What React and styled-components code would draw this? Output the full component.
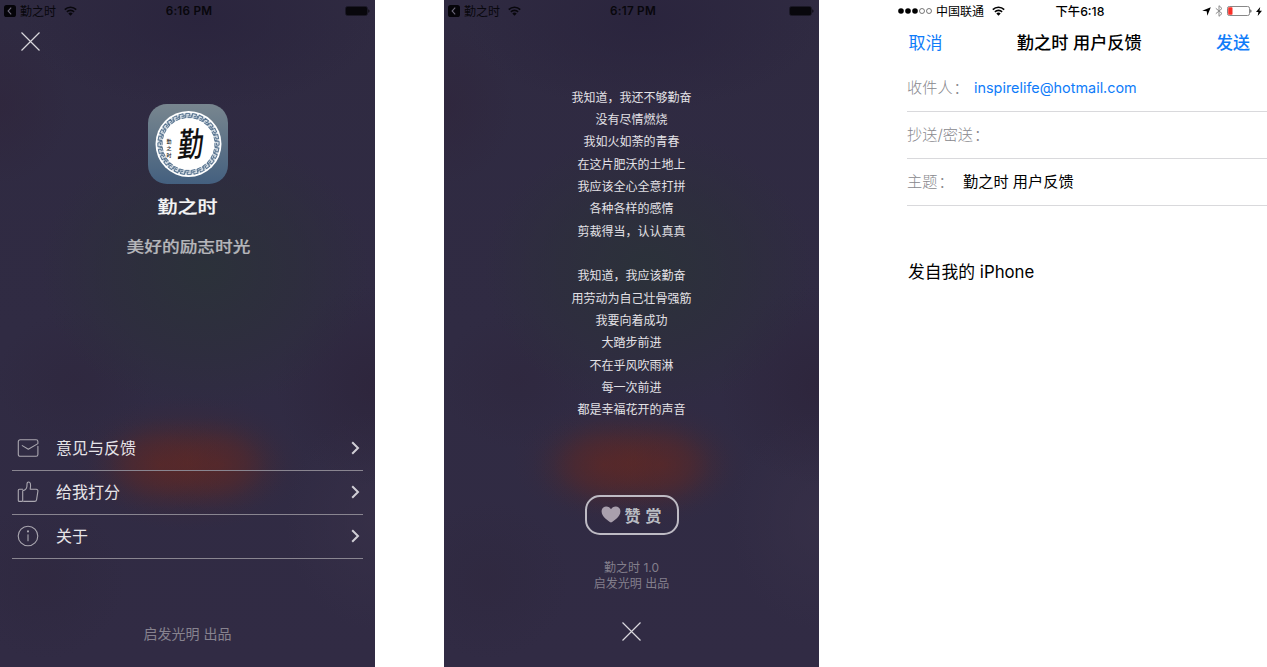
import React from 'react';
import styled, { createGlobalStyle } from 'styled-components';

const GlobalStyle = createGlobalStyle`
  * { box-sizing: border-box; }
  body { margin: 0; background: #fff; }
`;

const Board = styled.main`
  display: flex;
  width: 1267px;
  height: 667px;
  overflow: hidden;
  font-family: Inter, "Noto Sans CJK SC", sans-serif;
  white-space: nowrap;
`;

const Phone = styled.section`
  display: flex;
  flex-direction: column;
  flex: none;
  width: 375px;
  height: 667px;
  margin-left: ${(p) => p.$gap || 0}px;
`;

const DarkPhone = styled(Phone)`
  background:
    radial-gradient(ellipse 72px 50px at 160px 465px, rgba(96, 40, 36, 0.6) 0%, rgba(92, 40, 38, 0.42) 40%, rgba(84, 40, 42, 0.16) 70%, rgba(78, 40, 46, 0.04) 90%, transparent 100%),
    radial-gradient(ellipse 72px 50px at 216px 465px, rgba(96, 40, 36, 0.6) 0%, rgba(92, 40, 38, 0.42) 40%, rgba(84, 40, 42, 0.16) 70%, rgba(78, 40, 46, 0.04) 90%, transparent 100%),
    radial-gradient(ellipse 120px 68px at 188px 463px, rgba(92, 40, 38, 0.6) 0%, rgba(84, 40, 42, 0.38) 40%, rgba(74, 40, 48, 0.15) 70%, rgba(70, 40, 52, 0.04) 90%, transparent 100%),
    radial-gradient(ellipse 165px 140px at 205px 270px, rgba(43, 50, 57, 0.9) 0%, rgba(44, 48, 58, 0.55) 55%, transparent 100%),
    radial-gradient(ellipse 100px 100px at 375px 385px, rgba(44, 34, 56, 0.6), transparent 100%),
    radial-gradient(ellipse 80px 70px at 75px 380px, rgba(46, 38, 60, 0.5), transparent 100%),
    radial-gradient(ellipse 70px 80px at 0px 105px, rgba(47, 37, 59, 0.6), transparent 100%),
    radial-gradient(ellipse 180px 90px at 200px 20px, rgba(42, 36, 61, 0.9), transparent 100%),
    radial-gradient(ellipse 90px 110px at 375px 520px, rgba(55, 48, 72, 0.8), transparent 100%),
    radial-gradient(ellipse 80px 80px at 45px 580px, rgba(46, 39, 61, 0.5), transparent 100%),
    linear-gradient(#2f2a41, #302b43 50%, #312b44);
`;

const StatusBar = styled.header`
  display: grid;
  grid-template-columns: 1fr auto 1fr;
  align-items: center;
  height: 20px;
  padding: 1px ${(p) => p.$right ?? 5}px 0 ${(p) => p.$left ?? 4}px;
  font-size: 12px;
  line-height: 19px;
  color: ${(p) => p.$color || '#08070c'};
`;

const StatusSide = styled.div`
  display: flex;
  align-items: center;
  gap: ${(p) => p.$gap || 4}px;
  justify-content: ${(p) => (p.$end ? 'flex-end' : 'flex-start')};
  svg { flex: none; display: block; }
`;

const Clock = styled.time`
  font-weight: ${(p) => p.$weight || 600};
  font-size: ${(p) => p.$size || 11.7}px;
  letter-spacing: ${(p) => p.$track || 0}px;
  padding-top: 1px;
  padding-left: ${(p) => p.$shift || 0}px;
`;

const CloseBar = styled.div`
  display: flex;
  justify-content: ${(p) => (p.$center ? 'center' : 'flex-start')};
  padding: ${(p) => p.$pad};
  svg { display: block; }
`;

const AppIcon = styled.div`
  width: 80px;
  height: 80px;
  margin: 53px auto 0;
  svg { display: block; }
`;

const Brush = styled.div`
  font-family: "Noto Sans CJK SC", sans-serif;
  font-weight: 500;
  -webkit-text-stroke: 0.25px currentColor;
  text-align: center;
  font-size: ${(p) => p.$size}px;
  line-height: 24px;
  margin-top: ${(p) => p.$top || 0}px;
  padding-left: ${(p) => p.$shift || 0}px;
  color: ${(p) => p.$color};
  transform: scaleY(0.86);
`;

const Menu = styled.ul`
  list-style: none;
  margin: 170px 12px 0;
  padding: 0;
`;

const MenuItem = styled.li`
  display: flex;
  align-items: center;
  height: 44px;
  padding: 0 3px 1px 5px;
  border-bottom: 1px solid #898590;
  color: #e6e4e8;
  font-size: 16px;
  line-height: 24px;
  svg { display: block; flex: none; }
`;

const MenuLabel = styled.span`
  flex: 1;
  padding-left: 17px;
`;

const Maker = styled.footer`
  margin-top: 64px;
  text-align: center;
  font-size: 14px;
  line-height: 22px;
  color: #87838f;
`;

const Poem = styled.div`
  margin-top: 66.6px;
  text-align: center;
  font-size: 12px;
  line-height: 22.35px;
  color: #e3e1e6;
`;

const PoemLine = styled.div`
  height: 22.35px;
`;

const Praise = styled.button`
  display: flex;
  align-items: center;
  justify-content: center;
  gap: 3px;
  width: 94px;
  height: 40px;
  margin: 73px auto 0;
  padding: 0 0 0 5px;
  border: 2px solid #bebbc4;
  border-radius: 15px;
  background: transparent;
  font-family: "Noto Sans CJK SC", sans-serif;
  font-weight: 700;
  font-size: 16px;
  line-height: 20px;
  letter-spacing: 5px;
  color: #b9bcc2;
`;

const Version = styled.div`
  margin-top: 25px;
  text-align: center;
  font-size: 12px;
  line-height: 16px;
  color: #837f8c;
`;

const NavBar = styled.nav`
  display: grid;
  grid-template-columns: 1fr auto 1fr;
  align-items: center;
  height: 45px;
  padding: 0 17px 0 16.5px;
  font-size: 17px;
  line-height: 24px;
`;

const NavAction = styled.a`
  color: #0f7cf9;
  font-weight: ${(p) => (p.$strong ? 500 : 400)};
  text-align: ${(p) => (p.$strong ? 'right' : 'left')};
`;

const NavTitle = styled.h1`
  margin: 0;
  font-size: 17.2px;
  font-weight: 500;
`;

const Field = styled.div`
  display: flex;
  align-items: center;
  height: 47px;
  margin-left: 15px;
  border-bottom: 1px solid #d9d9dc;
  font-size: 15.2px;
  line-height: 22px;
`;

const FieldLabel = styled.span`
  display: flex;
  gap: 1px;
  width: ${(p) => p.$width}px;
  color: #88888d;
  font-weight: 300;
`;

const FieldValue = styled.span`
  color: ${(p) => p.$color || '#000'};
  font-size: ${(p) => p.$size || 15.2}px;
`;

const MailBody = styled.div`
  margin: 54px 0 0 16px;
  font-size: 16.8px;
  line-height: 24px;
  color: #000;
`;

const BackBadge = () => (
  <svg width="12" height="12" viewBox="0 0 12 12">
    <rect width="12" height="12" rx="2.6" fill="#050409" />
    <path d="M7.2 2.7 4.1 6l3.1 3.3" fill="none" stroke="#6a6678" strokeWidth="1.1" />
  </svg>
);

const Wifi = () => (
  <svg width="13" height="10" viewBox="0 0 13 10" fill="none" stroke="currentColor" strokeWidth="1.6">
    <path d="M.8 3.6a8.1 8.1 0 0 1 11.4 0M2.9 5.9a5.1 5.1 0 0 1 7.2 0" />
    <path d="M6.5 9.8 4.3 7.5a3.1 3.1 0 0 1 4.4 0z" fill="currentColor" stroke="none" />
  </svg>
);

const FullBattery = () => (
  <svg width="25" height="10" viewBox="0 0 25 10" fill="currentColor">
    <rect x=".5" y=".5" width="22" height="9" rx="2" fill="none" stroke="currentColor" opacity=".5" />
    <rect x="1" y="1" width="21" height="8" rx="1.3" />
    <path d="M23.4 3.2c1.4.5 1.4 3.1 0 3.6z" />
  </svg>
);

const Cross = () => (
  <svg width="19" height="19" viewBox="0 0 19 19" stroke="#dad8de" strokeWidth="1.15">
    <path d="M.5.5l18 18M18.5.5l-18 18" />
  </svg>
);

const Chevron = () => (
  <svg width="9" height="14" viewBox="0 0 9 14" fill="none" stroke="#d0ced5" strokeWidth="2">
    <path d="M1.2 1.2 7 7l-5.8 5.8" />
  </svg>
);

const iconProps = { width: 22, height: 22, viewBox: '0 0 22 22', fill: 'none', stroke: '#aaa7b0', strokeWidth: 1.1, strokeLinecap: 'round', strokeLinejoin: 'round' };

const MailIcon = () => (
  <svg {...iconProps}>
    <path d="M20.9 9.3v8.2a1.8 1.8 0 0 1-1.8 1.8H3.1a1.8 1.8 0 0 1-1.800-1.800V4.600a1.800 1.800 0 0 1 1.800-1.800H19.100a1.800 1.800 0 0 1 1.800 1.800V6.600L11.300 12.300 5.300 8.600" />
  </svg>
);

const ThumbIcon = () => (
  <svg {...iconProps}>
    <path d="M5.700 8.200H2.300a1 1 0 0 0-1 1V19.400a1 1 0 0 0 1 1H4.700a1 1 0 0 0 1-1V9.800c3.200-.6 4.500-3 4.300-6.300C9.900 1.800 10.600 1 11.600 1c1.700 0 2.500 2 1.600 7.200h6a1.700 1.700 0 0 1 1.700 2l-1.300 8.500a2 2 0 0 1-2 1.700H6.700" />
  </svg>
);

const InfoIcon = () => (
  <svg {...iconProps}>
    <circle cx="11" cy="11" r="9.8" />
    <path d="M11 9.700v6" />
    <circle cx="11" cy="6.400" r=".5" fill="#aaa7b0" />
  </svg>
);

const Heart = () => (
  <svg width="20" height="17" viewBox="0 0 20 17" fill="#a9a0ad">
    <path d="M10 16.600C7.500 15 .6 10.600.6 5.400.6 2.400 2.600.5 5.200.5 7.400.5 9.200 1.600 10 3.300 10.800 1.600 12.600.5 14.800.5c2.600 0 4.600 1.900 4.600 4.900 0 5.200-6.900 9.600-9.400 11.200z" />
  </svg>
);

const keyAngles = Array.from({ length: 28 }, (_, i) => (i * 360) / 28);

const Emblem = () => (
  <svg width="80" height="80" viewBox="0 0 80 80">
    <defs>
      <linearGradient id="sky" x1="0" y1="0" x2="0" y2="1">
        <stop offset="0" stopColor="#78868f" />
        <stop offset="1" stopColor="#44607f" />
      </linearGradient>
    </defs>
    <rect width="80" height="80" rx="19" fill="url(#sky)" />
    <circle cx="40.5" cy="40" r="33" fill="#fff" />
    <circle cx="40.5" cy="40" r="28.6" fill="none" stroke="#d3dbe2" strokeWidth="5" />
    {keyAngles.map((a) => (
      <path
        key={a}
        transform={`rotate(${a} 40.5 40) translate(40.5 11.4)`}
        d="M-2.7 2.2V-2H1.2V.6H-.9M-.9 2.2H2.7V-.6"
        fill="none"
        stroke="#54718e"
        strokeWidth=".95"
      />
    ))}
    <text transform="translate(29 53.5) rotate(-4) skewX(-10) scale(.82 1.08)" fontFamily="Noto Sans CJK SC, sans-serif" fontSize="31" fontWeight="500" fill="#111">勤</text>
    <g fontFamily="Noto Sans CJK SC, sans-serif" fontSize="5" fontWeight="500" fill="#222">
      <text x="18.5" y="38.5">勤</text>
      <text x="18.5" y="45.5">之</text>
      <text x="18.5" y="52.5">时</text>
    </g>
  </svg>
);

const SignalDots = () => (
  <svg width="34" height="6" viewBox="0 0 34 6" fill="#000">
    <circle cx="3" cy="3" r="2.8" />
    <circle cx="10" cy="3" r="2.8" />
    <circle cx="17" cy="3" r="2.8" />
    <g fill="none" stroke="#222" strokeWidth=".6">
      <circle cx="24" cy="3" r="2.5" />
      <circle cx="31" cy="3" r="2.5" />
    </g>
  </svg>
);

const LocationArrow = () => (
  <svg width="9" height="9" viewBox="0 0 9 9"><path d="M8.800.2 5.300 8.800 4.700 4.300.2 3.700z" fill="#000" /></svg>
);

const Bluetooth = () => (
  <svg width="8" height="12" viewBox="0 0 8 12" fill="none" stroke="#8b8b8b" strokeWidth="1">
    <path d="M.8 3.300 7 8.500 4 11.300V.7L7 3.500.8 8.700" />
  </svg>
);

const LowBattery = () => (
  <svg width="25" height="10" viewBox="0 0 25 10">
    <rect x=".5" y=".5" width="22" height="9" rx="1.8" fill="#fff" stroke="#888" />
    <rect x="1.2" y="1.2" width="4.3" height="7.6" rx=".8" fill="#fa3028" />
    <path d="M23.400 3.200c1.400.5 1.400 3.100 0 3.600z" fill="#333" />
  </svg>
);

const Bolt = () => (
  <svg width="6" height="9" viewBox="0 0 6 9"><path d="M4.200 0 0 5h2.400L1.700 9 6 3.800H3.500z" fill="#000" /></svg>
);

const DarkStatus = ({ time }) => (
  <StatusBar>
    <StatusSide>
      <BackBadge />
      <span>勤之时</span>
      <span />
      <Wifi />
    </StatusSide>
    <Clock $track={0.25} $shift={4}>{time}</Clock>
    <StatusSide $end><FullBattery /></StatusSide>
  </StatusBar>
);

const poem = [
  '我知道，我还不够勤奋', '没有尽情燃烧', '我如火如荼的青春', '在这片肥沃的土地上',
  '我应该全心全意打拼', '各种各样的感情', '剪裁得当，认认真真', '',
  '我知道，我应该勤奋', '用劳动为自己壮骨强筋', '我要向着成功', '大踏步前进',
  '不在乎风吹雨淋', '每一次前进', '都是幸福花开的声音',
];

const menu = [
  { label: '意见与反馈', Icon: MailIcon },
  { label: '给我打分', Icon: ThumbIcon },
  { label: '关于', Icon: InfoIcon },
];

export default function App() {
  return (
    <Board>
      <GlobalStyle />
      <DarkPhone>
        <DarkStatus time="6:16 PM" />
        <CloseBar $pad="12px 0 0 21px"><Cross /></CloseBar>
        <AppIcon><Emblem /></AppIcon>
        <Brush $size={20} $top={10} $color="#f4f4f5">勤之时</Brush>
        <Brush $size={17.7} $top={15} $shift={2} $color="#b5b6ba">美好的励志时光</Brush>
        <Menu>
          {menu.map(({ label, Icon }) => (
            <MenuItem key={label}>
              <Icon />
              <MenuLabel>{label}</MenuLabel>
              <Chevron />
            </MenuItem>
          ))}
        </Menu>
        <Maker>启发光明 出品</Maker>
      </DarkPhone>

      <DarkPhone $gap={69}>
        <DarkStatus time="6:17 PM" />
        <Poem>
          {poem.map((line, i) => <PoemLine key={i}>{line}</PoemLine>)}
        </Poem>
        <Praise><Heart /><span>赞赏</span></Praise>
        <Version>勤之时 1.0<br />启发光明 出品</Version>
        <CloseBar $center $pad="30px 0 0"><Cross /></CloseBar>
      </DarkPhone>

      <Phone $gap={73}>
        <StatusBar $color="#000" $left={6} $right={5}>
          <StatusSide>
            <SignalDots />
            <span>中国联通</span>
            <span />
            <Wifi />
          </StatusSide>
          <Clock $size={12.3} $weight={500}>下午6:18</Clock>
          <StatusSide $end>
            <LocationArrow />
            <Bluetooth />
            <LowBattery />
            <Bolt />
          </StatusSide>
        </StatusBar>
        <NavBar>
          <NavAction>取消</NavAction>
          <NavTitle>勤之时 用户反馈</NavTitle>
          <NavAction $strong>发送</NavAction>
        </NavBar>
        <Field>
          <FieldLabel $width={67}><span>收件人</span><span>：</span></FieldLabel>
          <FieldValue $color="#0f7cf9" $size={14.4}>inspirelife@hotmail.com</FieldValue>
        </Field>
        <Field>
          <FieldLabel $width={90}><span>抄送/密送</span><span>：</span></FieldLabel>
        </Field>
        <Field>
          <FieldLabel $width={56}><span>主题</span><span>：</span></FieldLabel>
          <FieldValue>勤之时 用户反馈</FieldValue>
        </Field>
        <MailBody>发自我的 iPhone</MailBody>
      </Phone>
    </Board>
  );
}
